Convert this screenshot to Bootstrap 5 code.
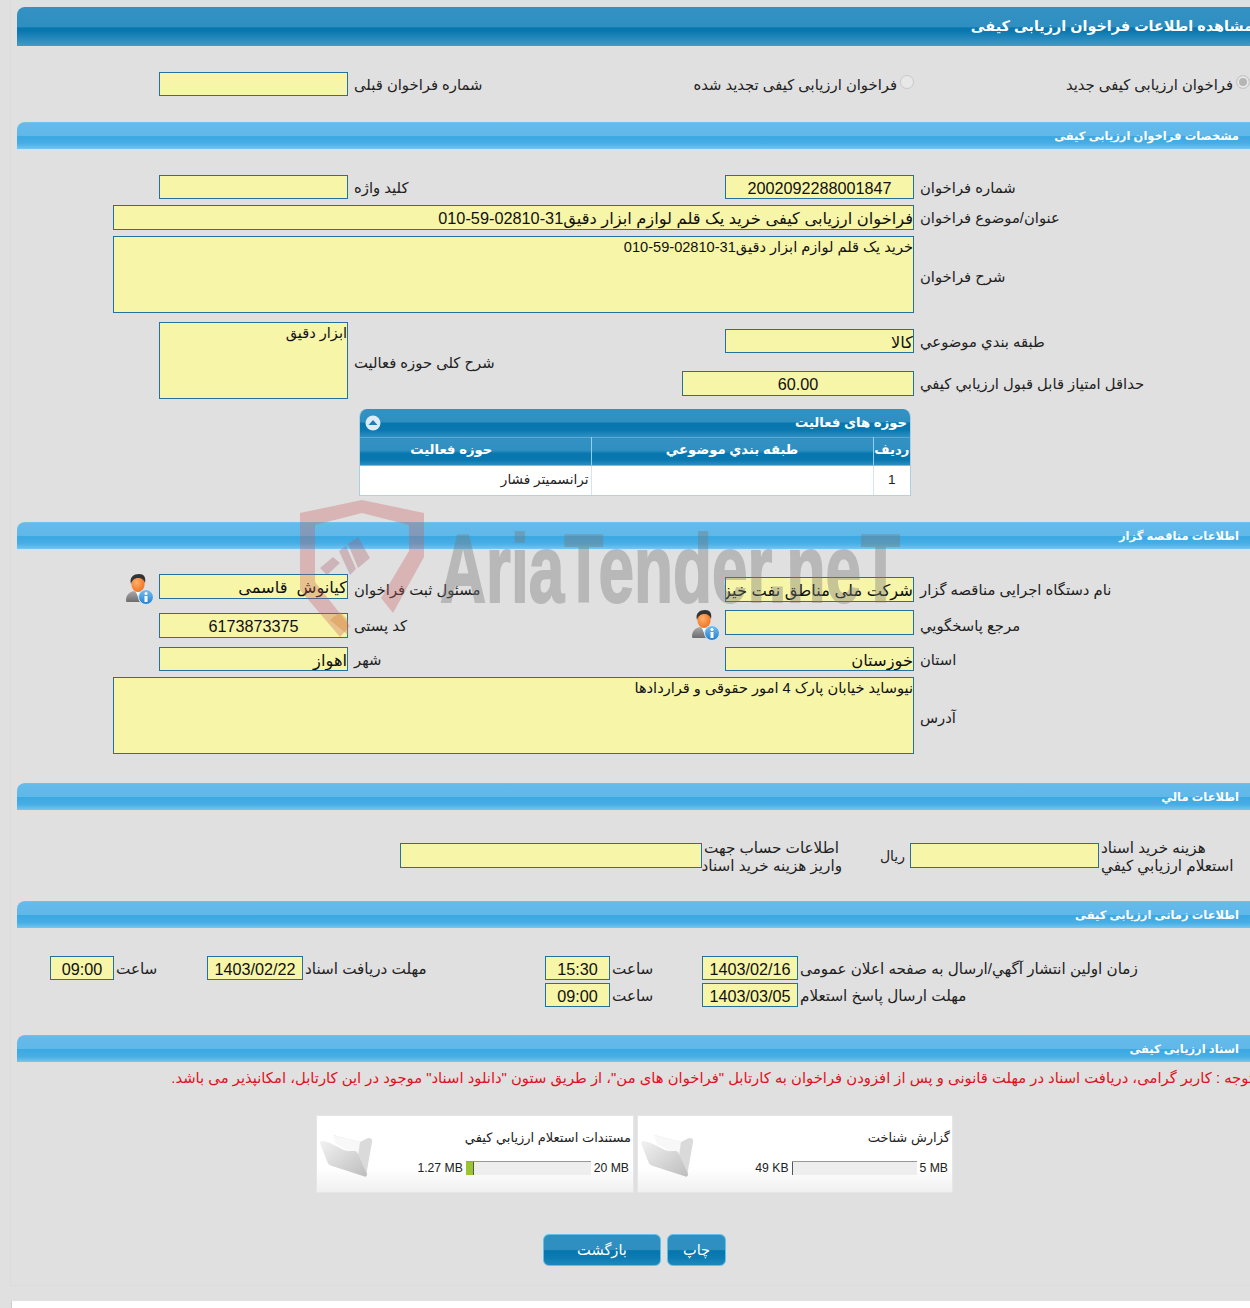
<!DOCTYPE html>
<html lang="fa" dir="rtl">
<head>
<meta charset="utf-8">
<title>مشاهده اطلاعات فراخوان ارزیابی کیفی</title>
<link href="https://cdn.jsdelivr.net/npm/bootstrap@5.3.0/dist/css/bootstrap.min.css" rel="stylesheet">
<style>
html,body{height:1308px;overflow:hidden}
body{background:#e0e0e0;font-family:"Liberation Sans","DejaVu Sans",sans-serif;font-size:14.6px;color:#222;position:relative;width:1250px}
.defs{position:absolute;width:0;height:0;overflow:hidden}
.frame{margin-left:10px;border-left:1px solid #dcdcdc;border-bottom:1px solid #dcdcdc;padding-left:6px;height:1286px;overflow:hidden}
.tailstrip{margin:15px 0 0 11px;height:7px;background:#fff;border-left:1px solid #ccc}
.tbar{height:39px;margin-top:7px;border-top-left-radius:8px;background:linear-gradient(#3392c3 0,#2f8fc0 50%,#0676ae 54%,#0a78af 62%,#429aca 100%);color:#fff;font-weight:700;font-size:14.4px;line-height:38px;white-space:nowrap}
.tbar span{margin-right:-3px;display:inline-block}
.sbar{height:27px;border-top-left-radius:8px;background:linear-gradient(#72c4ee 0,#64bbea 6%,#60b8e9 50%,#3aa8e2 54%,#48aee5 80%,#74c6f0 100%);color:#fff;font-weight:700;font-size:11.5px;line-height:28px;padding-right:11px}
.rw{display:flex;align-items:flex-start}
.fld{padding:0;border:1px solid #24709f;border-radius:0;background:#f7f5a8;color:#111;font-size:16.3px;line-height:24px;white-space:nowrap;overflow:hidden;flex:none;min-height:0}
.fld:focus{background:#f7f5a8}
.fnum{font-size:16.2px;text-align:center;font-family:"Liberation Sans",sans-serif}
.fsm{font-size:14.6px;white-space:normal;line-height:20px}
.lab{flex:none;text-align:left;padding-left:6px;line-height:26px;height:24px;font-size:14.8px;color:#222;white-space:nowrap}
.lab2{line-height:18px;padding-left:2px;margin-top:-4px;font-size:15.2px}
.tight{padding-left:2px;font-size:15.2px}
.w40{width:40px}.w65{width:65px}.w64{width:64px}.w68{width:68px}.w92{width:92px}.w93{width:93px}.w96{width:96px}.w140{width:140px}.w151{width:151px}.w152{width:152px}.w189{width:189px}.w232{width:232px}.w242{width:242px}.w302{width:302px}.w334{width:334px}.w336{width:336px}.w377{width:377px}.w414{width:414px}.w452{width:452px}.w568{width:568px}.w801{width:801px}
.h24{height:24px}.h25{height:25px}.h77{height:77px}
.m3{margin-top:3px}.m6{margin-top:6px}.m7{margin-top:7px}.m9{margin-top:9px}.m10{margin-top:10px}.m18{margin-top:18px}.m25{margin-top:25px}.m26{margin-top:26px}.m27{margin-top:27px}.m28{margin-top:28px}.m29{margin-top:29px}.m32{margin-top:32px}.m33{margin-top:33px}.m41{margin-top:41px}
.rh36{height:36px}.rh37{height:37px}
.lab77b{line-height:82px;height:77px}
.rad{flex:none;display:flex;align-items:flex-start;line-height:26px;height:24px;font-size:14.8px;gap:3px;white-space:nowrap}
.rad .form-check-input{margin:3px 0 0;width:14px;height:14px;background-color:#e8e8e8;border:1px solid #c8c8c8;opacity:1;flex:none}
.rad .form-check-input:checked{background-color:#b5b5b5;border-color:#c8c8c8;background-image:none;box-shadow:inset 0 0 0 2px #e8e8e8}
.pnl{width:552px;margin-right:339px;border-radius:8px 8px 0 0;overflow:hidden;border:1px solid #a9cfe3;border-bottom:1px solid #b9cfe0;border-top:0}
.phead{height:28px;background:linear-gradient(#3392c3 0,#2f8fc0 45%,#0676ae 52%,#0a78af 75%,#2f90c4 100%);color:#fff;font-weight:700;font-size:13.2px;line-height:28px;padding-right:3px;position:relative}
.ptog{position:absolute;left:5px;top:6px;width:16px;height:16px;display:block}
.ptable{margin:0;table-layout:fixed;width:550px;font-size:13.6px;--bs-table-bg:transparent}
.ptable th{height:28px;padding:0;background:linear-gradient(#3392c3 0,#2f8fc0 45%,#0676ae 55%,#0a78af 80%,#2f90c4 100%);color:#fff;text-align:center;font-size:13.2px;line-height:24px;border:0;border-left:1px solid #8fd0f0;border-top:1px solid #5aaad4;border-bottom:1px solid #6cc2ee;vertical-align:top}
.ptable th:last-child{padding-right:48px}
.ptable td{height:29px;padding:0 2px;background:#fff;border:0;border-left:1px solid #d8e4ec;vertical-align:middle;color:#222}
.ptable th:last-child,.ptable td:last-child{border-left:0}
.pc1{width:37px}.pc2{width:282px}
.usr{width:29px;height:31px;flex:none;display:block}
.usrl{margin-right:5px}
.riyal{padding-right:5px;padding-top:4px;text-align:right;line-height:18px;flex:none;font-size:14px}
.warn{color:#e01020;font-size:14.8px;line-height:22px;height:22px;margin-top:5px;white-space:nowrap;margin-right:-3px}
.cards{display:flex;gap:3px;margin:26px 297px 0 0}
.fcard{height:78px;display:flex;background:linear-gradient(#fff 0,#fff 68%,#f0f0f0 100%);border:1px solid #e6e6e6;border-radius:0;flex:none;flex-direction:row;padding:0}
.fc1{width:316px}.fc2{width:318px}
.finfo{flex:1;padding:13px 2px 0 4px;min-width:0}
.ftitle{font-size:13px;line-height:18px;color:#222;height:32px;white-space:nowrap}
.fbar{display:flex;align-items:center;gap:3px;direction:ltr;justify-content:flex-end;margin-right:2px;font-size:12.2px;line-height:14px;color:#222;font-family:"Liberation Sans",sans-serif}
.fbar .progress{height:14px;border-radius:0;background:#eee;border-top:1px solid #999;flex:none;width:125px;--bs-progress-bg:#eee}
.fbar .progress-bar{background:#9bc52f;border-right:1px solid #555}
.ffold{width:60px;height:46px;flex:none;margin:16px 0 0 3px;display:block}
.btnrow{display:flex;gap:6px;margin:41px 524px 0 0}
.btn-sky{height:32px;padding:0;border-radius:6px;border:1px solid #5fc0ea;background:linear-gradient(#2f8fc0 0,#2f8fc0 50%,#0676ae 52%,#0c7bb2 75%,#1f88bd 100%);color:#fff;font-size:14.6px;line-height:30px}
.bw59{width:59px}.bw118{width:118px}
.wmark{position:absolute;left:290px;top:490px;width:630px;height:160px;pointer-events:none;z-index:5}
</style>
</head>
<body>
<svg class="defs" aria-hidden="true">
<defs>
<radialGradient id="gf" cx=".4" cy=".4" r=".7"><stop offset="0" stop-color="#ffb06a"/><stop offset="1" stop-color="#ee6d1c"/></radialGradient>
<linearGradient id="gs" x1="0" y1="0" x2="0" y2="1"><stop offset="0" stop-color="#a9a9a9"/><stop offset="1" stop-color="#6d6d6d"/></linearGradient>
<linearGradient id="gb" x1="0" y1="0" x2="0" y2="1"><stop offset="0" stop-color="#7cc0f0"/><stop offset="1" stop-color="#1f7fd0"/></linearGradient>
<linearGradient id="gfo" x1="0" y1="0" x2="1" y2="1"><stop offset="0" stop-color="#f2f2f2"/><stop offset="1" stop-color="#bdbdbd"/></linearGradient>
<symbol id="iuser" viewBox="0 0 29 31">
<path d="M1 27c0-6 3-9 8-10l4 3 4-3c4 1 7 3 7 8v3H4c-2 0-3 0-3-1z" fill="url(#gs)"/>
<path d="M11 18l2 5 2-5z" fill="#fff"/>
<ellipse cx="13" cy="10" rx="6.600" ry="8" fill="url(#gf)"/>
<path d="M6 10C4 3 9 0 14 0c5 0 7 3 6 9-1-3-3-5-7-5-3 0-6 2-7 6z" fill="#333"/>
<circle cx="21" cy="23" r="7.500" fill="url(#gb)" stroke="#d8ecfa"/>
<circle cx="21" cy="19.500" r="1.500" fill="#fff"/><rect x="19.500" y="22" width="3" height="6" fill="#fff"/>
</symbol>
<symbol id="ifold" viewBox="0 0 60 46">
<path d="M13 3L40 10 48 6Q53 6 52 10L46 44 30 20z" fill="#dadada"/>
<path d="M13 3L40 10 38 24 16 12z" fill="#f8f8f8"/>
<path d="M0 11Q0 9 3 9L10 11 20 16Q26 20 31 19L35 19Q37 19 38 22L47 42Q47 46 43 44L12 34Q8 33 7 29z" fill="url(#gfo)"/>
</symbol>
</defs>
</svg>

<div class="frame">
  <div class="tbar"><span>مشاهده اطلاعات فراخوان ارزیابی کیفی</span></div>

  <div class="rw m26 h24">
    <div class="rad w336"><input class="form-check-input" type="radio" checked disabled aria-label="جدید"><span>فراخوان ارزیابی کیفی جدید</span></div>
    <div class="rad w414"><input class="form-check-input" type="radio" disabled aria-label="تجدید"><span>فراخوان ارزیابی کیفی تجدید شده</span></div>
    <div class="lab w152">شماره فراخوان قبلی</div>
    <div class="form-control fld w189 h24"></div>
  </div>

  <div class="sbar m26">مشخصات فراخوان ارزیابی کیفی</div>

  <div class="rw m26">
    <div class="lab w336">شماره فراخوان</div>
    <div class="form-control fld fnum w189 h24">2002092288001847</div>
    <div class="lab w377">کلید واژه</div>
    <div class="form-control fld w189 h24"></div>
  </div>
  <div class="rw m6">
    <div class="lab w336">عنوان/موضوع فراخوان</div>
    <div class="form-control fld w801 h25">فراخوان ارزیابی کیفی خرید یک قلم لوازم ابزار دقیق31-02810-59-010</div>
  </div>
  <div class="rw m6">
    <div class="lab lab77b w336">شرح فراخوان</div>
    <div class="form-control fld fsm w801 h77">خرید یک قلم لوازم ابزار دقیق31-02810-59-010</div>
  </div>
  <div class="rw m9">
    <div class="w568">
      <div class="rw m7">
        <div class="lab w336">طبقه بندي موضوعي</div>
        <div class="form-control fld w189 h24">کالا</div>
      </div>
      <div class="rw m18">
        <div class="lab w336">حداقل امتياز قابل قبول ارزيابي کيفي</div>
        <div class="form-control fld fnum w232 h25">60.00</div>
      </div>
    </div>
    <div class="lab lab77b w334">شرح کلی حوزه فعالیت</div>
    <div class="form-control fld fsm w189 h77">ابزار دقیق</div>
  </div>

  <div class="pnl m10">
    <div class="phead">حوزه های فعالیت
      <svg class="ptog" viewBox="0 0 16 16"><circle cx="8" cy="8" r="7.500" fill="#dcecf6"/><path d="M3.500 10L8 5l4.500 5z" fill="#1f7fb5"/></svg>
    </div>
    <table class="table ptable">
      <colgroup><col class="pc1"><col class="pc2"><col></colgroup>
      <thead><tr><th>رديف</th><th>طبقه بندي موضوعي</th><th>حوزه فعالیت</th></tr></thead>
      <tbody><tr><td class="text-center">1</td><td></td><td>ترانسمیتر فشار</td></tr></tbody>
    </table>
  </div>

  <div class="sbar m26">اطلاعات مناقصه گزار</div>

  <div class="rw m25 rh36">
    <div class="lab w336 m3">نام دستگاه اجرایی مناقصه گزار</div>
    <div class="form-control fld w189 h25 m3">شرکت ملی مناطق نفت خیز جنوب</div>
    <div class="lab w377 m3">مسئول ثبت فراخوان</div>
    <div class="form-control fld w189 h25">کیانوش&nbsp; قاسمی</div>
    <svg class="usr usrl"><use href="#iuser"/></svg>
  </div>
  <div class="rw rh37">
    <div class="lab w336 m3">مرجع پاسخگويي</div>
    <div class="form-control fld w189 h25"></div>
    <div class="w377 d-flex justify-content-between flex-none">
      <svg class="usr usrl"><use href="#iuser"/></svg>
      <div class="lab m3">کد پستی</div>
    </div>
    <div class="form-control fld fnum w189 h25 m3">6173873375</div>
  </div>
  <div class="rw">
    <div class="lab w336">استان</div>
    <div class="form-control fld w189 h24">خوزستان</div>
    <div class="lab w377">شهر</div>
    <div class="form-control fld w189 h24">اهواز</div>
  </div>
  <div class="rw m6">
    <div class="lab lab77b w336">آدرس</div>
    <div class="form-control fld fsm w801 h77">نیوساید خیابان پارک 4 امور حقوقی و قراردادها</div>
  </div>

  <div class="sbar m29">اطلاعات مالي</div>

  <div class="rw m33 h25">
    <div class="lab lab2 w151">هزینه خرید اسناد<br>استعلام ارزیابي کیفي</div>
    <div class="form-control fld w189 h25"></div>
    <div class="riyal w68">ریال</div>
    <div class="lab lab2 w140">اطلاعات حساب جهت<br>واریز هزینه خرید اسناد</div>
    <div class="form-control fld w302 h25"></div>
  </div>

  <div class="sbar m33">اطلاعات زمانی ارزیابی کیفی</div>

  <div class="rw m28">
    <div class="lab tight w452">زمان اولین انتشار آگهي/ارسال به صفحه اعلان عمومی</div>
    <div class="form-control fld fnum w96 h24">1403/02/16</div>
    <div class="lab tight w92">ساعت</div>
    <div class="form-control fld fnum w65 h24">15:30</div>
    <div class="lab tight w242">مهلت دریافت اسناد</div>
    <div class="form-control fld fnum w96 h24">1403/02/22</div>
    <div class="lab tight w93">ساعت</div>
    <div class="form-control fld fnum w64 h24">09:00</div>
  </div>
  <div class="rw m3">
    <div class="lab tight w452">مهلت ارسال پاسخ استعلام</div>
    <div class="form-control fld fnum w96 h24">1403/03/05</div>
    <div class="lab tight w92">ساعت</div>
    <div class="form-control fld fnum w65 h24">09:00</div>
  </div>

  <div class="sbar m28">اسناد ارزیابی کیفی</div>

  <div class="warn">توجه : کاربر گرامی، دریافت اسناد در مهلت قانونی و پس از افزودن فراخوان به کارتابل "فراخوان های من"، از طریق ستون "دانلود اسناد" موجود در این کارتابل، امکانپذیر می باشد.</div>

  <div class="cards">
    <div class="card fcard fc1">
      <div class="finfo">
        <div class="ftitle">گزارش شناخت</div>
        <div class="fbar"><span>49 KB</span><div class="progress"><div class="progress-bar" style="width:1%"></div></div><span>5 MB</span></div>
      </div>
      <svg class="ffold"><use href="#ifold"/></svg>
    </div>
    <div class="card fcard fc2">
      <div class="finfo">
        <div class="ftitle">مستندات استعلام ارزیابي کیفي</div>
        <div class="fbar"><span>1.27 MB</span><div class="progress"><div class="progress-bar" style="width:6.35%"></div></div><span>20 MB</span></div>
      </div>
      <svg class="ffold"><use href="#ifold"/></svg>
    </div>
  </div>

  <div class="btnrow">
    <button type="button" class="btn btn-sky bw59">چاپ</button>
    <button type="button" class="btn btn-sky bw118">بازگشت</button>
  </div>
</div>
<div class="tailstrip"></div>

<svg class="wmark" viewBox="290 490 630 160" aria-hidden="true">
  <g fill="#c85a5a" fill-opacity=".33">
    <path d="M300 513L362 500 424 513V557L393 613 381 598 409 551V525L362 513 315 525V582L350 626 340 637 300 590z"/>
    <path d="M348 544L358 537 370 558 358 568zM339 551L346 546 356 569 350 575zM320 568L333 557 340 563 327 575z" fill="#a85a6a"/>
  </g>
  <path d="M330 620l10-8 8 8v15z" fill="#d88a3a" fill-opacity=".4"/>
  <text x="440" y="602" font-family="Liberation Sans, sans-serif" font-weight="700" font-size="96" textLength="460" lengthAdjust="spacingAndGlyphs" fill="#787878" stroke="#787878" stroke-width="2" opacity=".38" direction="ltr">AriaTender.neT</text>
</svg>
</body>
</html>
